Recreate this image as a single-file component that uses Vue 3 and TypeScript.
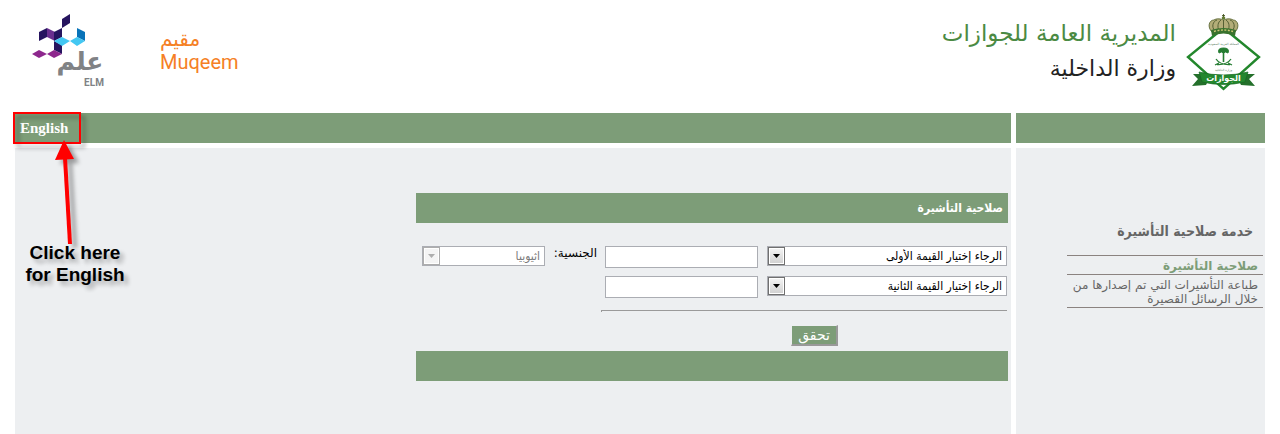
<script setup lang="ts">
import { ref } from 'vue'

interface Criterion {
  id: string
  label: string
  placeholder: string
}

const criteria: Criterion[] = [
  { id: 'first', label: 'القيمة الأولى', placeholder: 'الرجاء إختيار القيمة الأولى' },
  { id: 'second', label: 'القيمة الثانية', placeholder: 'الرجاء إختيار القيمة الثانية' },
]

const values = ref<string[]>(['', ''])
const nationality = ref('اثيوبيا')
</script>

<template>
  <div class="page" dir="rtl">
    <header class="header">
      <div class="brand">
        <svg class="emblem" viewBox="0 0 84 90" role="img" aria-label="الجوازات">
          <path d="M42.5 20 L78 49 L42.5 81 L7 49 Z" fill="#fff" stroke="#23872c" stroke-width="2.4" />
          <path d="M31 24 C26 19 28 12 33 12 C36 10 40 11 42.5 12 C45 11 49 10 52 12 C57 12 59 19 54 24 Z" fill="#b3ad78" stroke="#5d6a38" stroke-width="0.9" />
          <path d="M34 23 C30 19 32 13 36 12 M38 23 C36 18 37 14 40 12 M47 23 C49 18 48 14 45 12 M51 23 C55 19 53 13 49 12 M42.5 22 V12" fill="none" stroke="#566034" stroke-width="1" />
          <path d="M30 22 Q42.5 18 55 22 L54 28 Q42.5 23 31 28 Z" fill="#39722d" />
          <path d="M33 23.5 Q42.5 20.5 52 23.5" fill="none" stroke="#d0c777" stroke-width="1.4" stroke-dasharray="2 1.5" />
          <circle cx="42.5" cy="10" r="1.8" fill="#617b32" />
          <path d="M42.5 6 V9 M41 7.5 H44" stroke="#4c5a27" stroke-width="0.9" />
          <text class="emblem-small" x="42.5" y="37">المملكة العربية السعودية</text>
          <g stroke="#247c31" fill="none">
            <path d="M42.5 43 V54" stroke-width="1.6" />
            <path d="M38 45 Q36 40 42.5 40 Q49 40 47 45 Q44.500 43 42.5 45 Q40.500 43 38 45 Z" fill="#247c31" stroke-width="1" />
            <path d="M35 51 Q39 57 49 56.500 M50 51 Q46 57 36 56.500 M34 57 L38 55 M51 57 L47 55" stroke-width="1.3" />
          </g>
          <text class="emblem-small" x="42.5" y="63">وزارة الداخلية</text>
          <path d="M20 66 L12 66 L17 71 L11 78 L25 77 L27 73 Z M65 66 L74 66 L68 71 L74 78 L60 77 L58 73 Z" fill="#24702b" />
          <path d="M18 64 Q42.5 70 67 64 L64 74 Q42.5 79 21 74 Z" fill="#24872e" stroke="#176923" stroke-width="0.7" />
          <text class="emblem-name" x="42.5" y="73">الجوازات</text>
        </svg>
        <div class="brand-text">
          <span class="directorate">المديرية العامة للجوازات</span>
          <span class="ministry">وزارة الداخلية</span>
        </div>
      </div>
      <div class="partners">
        <div class="muqeem">
          <span class="muqeem-ar">مقيم</span>
          <span class="muqeem-en" dir="ltr">Muqeem</span>
        </div>
        <svg class="elm" viewBox="0 0 90 84" role="img" aria-label="علم ELM">
          <path d="M38 11 L46 6 V15 L38 20 Z" fill="#26145f" />
          <path d="M15 24 L23 20 V29 L15 33 Z" fill="#26145f" />
          <path d="M23 20 L31 24 V33 L23 29 Z" fill="#6a2f8f" />
          <path d="M30 24 L38 20 V29 L30 33 Z" fill="#26145f" />
          <path d="M30 33 L38 37 V46 L30 42 Z" fill="#26145f" />
          <path d="M53 20 L61 24 V33 L53 29 Z" fill="#0873b9" />
          <path d="M30 33 L38 29 L46 33 L38 38 Z M46 33 L53 29 L61 33 L53 38 Z" fill="#43c7f2" />
          <path d="M8 46 L15 42 L23 46 L15 50 Z M23 46 L30 42 L38 46 L30 50 Z" fill="#8d278d" />
          <text class="elm-ar" x="56" y="62">علم</text>
          <text class="elm-en" x="70" y="78">ELM</text>
        </svg>
      </div>
    </header>

    <div class="bar"></div>
    <nav class="bar language-bar">
      <a class="language" href="#" lang="en">English</a>
      <div class="callout" dir="ltr">
        <span class="callout-box"></span>
        <svg class="callout-arrow" viewBox="0 0 30 108" aria-hidden="true">
          <path d="M15 18 L20 104" stroke="#f00" stroke-width="4" />
          <path d="M14 0 L24 19 L5 20 Z" fill="#f00" />
        </svg>
        <p class="callout-text">Click here<br />for English</p>
      </div>
    </nav>

    <aside class="panel sidebar">
      <h2 class="sidebar-title">خدمة صلاحية التأشيرة</h2>
      <ul class="menu">
        <li><a class="current" href="#">صلاحية التأشيرة</a></li>
        <li><a href="#">طباعة التأشيرات التي تم إصدارها من خلال الرسائل القصيرة</a></li>
      </ul>
    </aside>

    <main class="panel">
      <form class="card" @submit.prevent>
        <h1 class="card-title">صلاحية التأشيرة</h1>
        <div class="fields">
          <div v-for="(item, index) in criteria" :key="item.id" class="row">
            <span class="select wide">
              <select :aria-label="item.label">
                <option>{{ item.placeholder }}</option>
              </select>
              <span class="drop"><svg viewBox="0 0 7 4"><path d="M0 0 H7 L3.5 4 Z" /></svg></span>
            </span>
            <input v-model="values[index]" class="value" type="text" :aria-label="item.label" />
            <template v-if="index === 0">
              <label class="label" for="nationality">الجنسية:</label>
              <span class="select narrow">
                <select id="nationality" v-model="nationality" disabled>
                  <option>اثيوبيا</option>
                </select>
                <span class="drop off"><svg viewBox="0 0 7 4"><path d="M0 0 H7 L3.5 4 Z" /></svg></span>
              </span>
            </template>
          </div>
          <hr class="rule" />
          <div class="actions">
            <button class="verify" type="submit">تحقق</button>
          </div>
        </div>
        <div class="card-foot"></div>
      </form>
    </main>
  </div>
</template>

<style>
body {
  margin: 0;
  background: #fff;
}
</style>

<style scoped>
.page {
  box-sizing: border-box;
  min-height: 100vh;
  padding: 0 15px;
  display: grid;
  grid-template-columns: 249px 1fr;
  grid-template-rows: 113px 30px 1fr;
  column-gap: 5px;
  font-family: "DejaVu Sans", sans-serif;
  font-size: 12px;
  color: #000;
}

.header {
  grid-column: 1 / -1;
  display: flex;
  justify-content: space-between;
  align-items: flex-start;
  padding-top: 8px;
}

.brand,
.partners {
  display: flex;
  align-items: flex-start;
}

.emblem {
  width: 84px;
  height: 90px;
}

.emblem-small {
  font-size: 3px;
  fill: #53795a;
  text-anchor: middle;
}

.emblem-name {
  font-size: 8px;
  font-weight: bold;
  fill: #fff;
  text-anchor: middle;
}

.brand-text {
  display: flex;
  flex-direction: column;
  padding-top: 8px;
  margin-right: 5px;
  white-space: nowrap;
  line-height: 35px;
}

.directorate {
  font-size: 23px;
  color: #4b8a43;
}

.ministry {
  font-size: 22px;
  color: #222;
}

.muqeem {
  display: flex;
  flex-direction: column;
  align-items: flex-end;
  padding-top: 20px;
  margin-left: 46px;
  color: #f58025;
}

.muqeem-ar {
  font-size: 20px;
  line-height: 22px;
}

.muqeem-en {
  font-family: Roboto, sans-serif;
  font-size: 20px;
  line-height: 24px;
}

.elm {
  width: 90px;
  height: 84px;
  margin-left: 9px;
}

.elm-ar {
  font-size: 25px;
  font-weight: bold;
  fill: #808285;
  text-anchor: middle;
}

.elm-en {
  font-family: Roboto, sans-serif;
  font-size: 10px;
  font-weight: bold;
  fill: #808285;
  text-anchor: middle;
}

.bar {
  background: #7d9d78;
}

.language-bar {
  position: relative;
  display: flex;
  justify-content: flex-end;
  align-items: center;
  padding-left: 5px;
}

.language {
  font-family: "Liberation Serif", serif;
  font-size: 15px;
  font-weight: bold;
  color: #fff;
  text-decoration: none;
}

.callout {
  position: absolute;
  left: -2px;
  top: -1px;
  width: 130px;
  pointer-events: none;
}

.callout-box {
  display: block;
  box-sizing: border-box;
  width: 68px;
  height: 32px;
  border: 2px solid #f00;
  filter: drop-shadow(4px 4px 2px rgba(0, 0, 0, 0.35));
}

.callout-arrow {
  position: absolute;
  left: 37px;
  top: 28px;
  width: 30px;
  height: 108px;
  overflow: visible;
  filter: drop-shadow(5px 4px 2px rgba(0, 0, 0, 0.35));
}

.callout-text {
  position: absolute;
  left: 2px;
  top: 130px;
  width: 120px;
  margin: 0;
  font-family: "Liberation Sans", sans-serif;
  font-size: 19px;
  font-weight: bold;
  line-height: 22px;
  text-align: center;
  text-shadow: 4px 4px 4px rgba(0, 0, 0, 0.3);
}

.panel {
  margin-top: 5px;
  background: #edeff1;
}

.sidebar {
  padding: 71px 2px 20px 51px;
}

.sidebar-title {
  margin: 0 10px 12px 0;
  font-family: "DejaVu Sans Condensed", "DejaVu Sans", sans-serif;
  font-size: 14px;
  line-height: 24px;
  color: #666;
  white-space: nowrap;
}

.menu {
  margin: 0;
  padding: 0;
  list-style: none;
  border-top: 1px solid #8b8380;
}

.menu li {
  padding: 3px 5px 1px 0;
  border-bottom: 1px solid #8b8380;
  line-height: 14px;
}

.menu a {
  display: block;
  color: #666;
  text-decoration: none;
}

.menu .current {
  font-weight: bold;
  color: #7d9d78;
}

.card {
  width: 592px;
  margin: 45px 3px 0 0;
}

.card-title {
  margin: 0;
  padding-right: 5px;
  background: #7d9d78;
  color: #fff;
  font-family: "DejaVu Sans Condensed", "DejaVu Sans", sans-serif;
  font-size: 12px;
  line-height: 30px;
}

.fields {
  padding: 23px 1px 5px 6px;
}

.row {
  display: flex;
  align-items: flex-start;
  height: 30px;
}

.select {
  position: relative;
  display: block;
}

.wide {
  width: 240px;
}

.narrow {
  width: 123px;
}

.select select {
  display: block;
  appearance: none;
  width: 100%;
  height: 20px;
  padding: 0 4px 0 20px;
  border: 1px solid #abadb3;
  border-radius: 0;
  background: #fff;
  color: #000;
  opacity: 1;
  font-family: "DejaVu Sans Condensed", "DejaVu Sans", sans-serif;
  font-size: 12px;
}

.select select:disabled {
  color: #7c7c7c;
}

.drop {
  position: absolute;
  left: 1px;
  top: 1px;
  box-sizing: border-box;
  width: 17px;
  height: 18px;
  border: 1px solid #707070;
  background: linear-gradient(#f4f4f4, #d0d0d0);
  box-shadow: inset 0 0 0 1px #fff;
  display: flex;
  align-items: center;
  justify-content: center;
  pointer-events: none;
}

.drop svg {
  width: 7px;
  height: 4px;
  fill: #000;
}

.drop.off {
  border-color: #adadad;
  background: #f4f4f4;
}

.drop.off svg {
  fill: #adadad;
}

.value {
  box-sizing: border-box;
  width: 153px;
  height: 22px;
  margin: 0 9px 0 0;
  padding: 1px 3px;
  border: 1px solid #abadb3;
  background: #fff;
  font: inherit;
}

.label {
  width: 52px;
  margin-right: 8px;
  line-height: 14px;
  white-space: nowrap;
}

.rule {
  width: 406px;
  height: 2px;
  box-sizing: border-box;
  margin: 4px 0 13px auto;
  border: 0;
  border-top: 1px solid #9a9a9a;
  border-left: 1px solid #9a9a9a;
}

.actions {
  display: flex;
  padding-right: 169px;
}

.verify {
  width: 47px;
  height: 21px;
  padding: 0;
  border: solid #999;
  border-width: 1px 2px 2px 1px;
  border-top-color: #edeff1;
  border-left-color: #edeff1;
  background: #7d9d78;
  color: #fff;
  font-family: "DejaVu Sans", sans-serif;
  font-size: 14px;
  line-height: 16px;
}

.card-foot {
  height: 30px;
  background: #7d9d78;
}
</style>
